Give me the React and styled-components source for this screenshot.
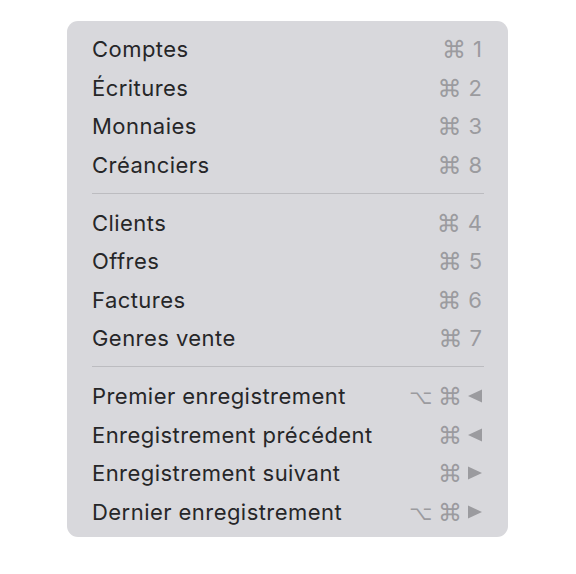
import React from "react";
import styled, { createGlobalStyle } from "styled-components";

const Global = createGlobalStyle`
  html, body { margin: 0; padding: 0; background: #ffffff; }
  body { font-family: Inter, "Liberation Sans", sans-serif; -webkit-font-smoothing: antialiased; }
`;

const Page = styled.div`
  display: flex;
  padding: 21px 0 0 67px;
`;

const Menu = styled.div`
  width: 441px;
  box-sizing: border-box;
  background: #d8d8dc;
  border-radius: 11px;
  padding: 9px 24px 6px 25px;
  display: flex;
  flex-direction: column;
`;

const Row = styled.div`
  height: 38.6px;
  display: flex;
  align-items: center;
  justify-content: space-between;
`;

const Label = styled.span`
  font-size: 22px;
  color: #262628;
  letter-spacing: 0.45px;
`;

const Keys = styled.span`
  display: flex;
  align-items: center;
  gap: 6px;
  color: #9b9b9f;
  padding-right: 2px;
`;

const Sym = styled.span`
  font-family: "DejaVu Sans", sans-serif;
  font-size: ${(p) => p.$size}px;
  line-height: 1;
  padding-top: 2px;
  color: #9b9b9f;
`;

const Digit = styled.span`
  font-family: Inter, "Liberation Sans", sans-serif;
  font-size: 22px;
  line-height: 1;
  margin-left: 1px;
`;

const Icon = styled.svg`
  display: block;
  flex: none;
`;

const Separator = styled.div`
  height: 1px;
  background: #bcbcc0;
  margin: 8.5px 0 9.5px;
`;

const GRAY = "#9b9b9f";

const Tri = ({ dir }) => (
  <Icon width="14" height="14" viewBox="0 0 14 14">
    {dir === "left" ? (
      <path d="M0 7 L14 0.5 L14 13.5 Z" fill={GRAY} />
    ) : (
      <path d="M14 7 L0 0.5 L0 13.5 Z" fill={GRAY} />
    )}
  </Icon>
);

const groups = [
  [
    ["Comptes", "1"],
    ["Écritures", "2"],
    ["Monnaies", "3"],
    ["Créanciers", "8"],
  ],
  [
    ["Clients", "4"],
    ["Offres", "5"],
    ["Factures", "6"],
    ["Genres vente", "7"],
  ],
  [
    ["Premier enregistrement", "left", true],
    ["Enregistrement précédent", "left", false],
    ["Enregistrement suivant", "right", false],
    ["Dernier enregistrement", "right", true],
  ],
];

export default function App() {
  return (
    <>
      <Global />
      <Page>
        <Menu>
          {groups.map((g, gi) => (
            <React.Fragment key={gi}>
              {gi > 0 && <Separator />}
              {g.map(([label, key, alt]) => (
                <Row key={label}>
                  <Label>{label}</Label>
                  <Keys>
                    {alt && <Sym $size={20}>⌥</Sym>}
                    <Sym $size={24}>⌘</Sym>
                    {key === "left" || key === "right" ? (
                      <Tri dir={key} />
                    ) : (
                      <Digit>{key}</Digit>
                    )}
                  </Keys>
                </Row>
              ))}
            </React.Fragment>
          ))}
        </Menu>
      </Page>
    </>
  );
}
